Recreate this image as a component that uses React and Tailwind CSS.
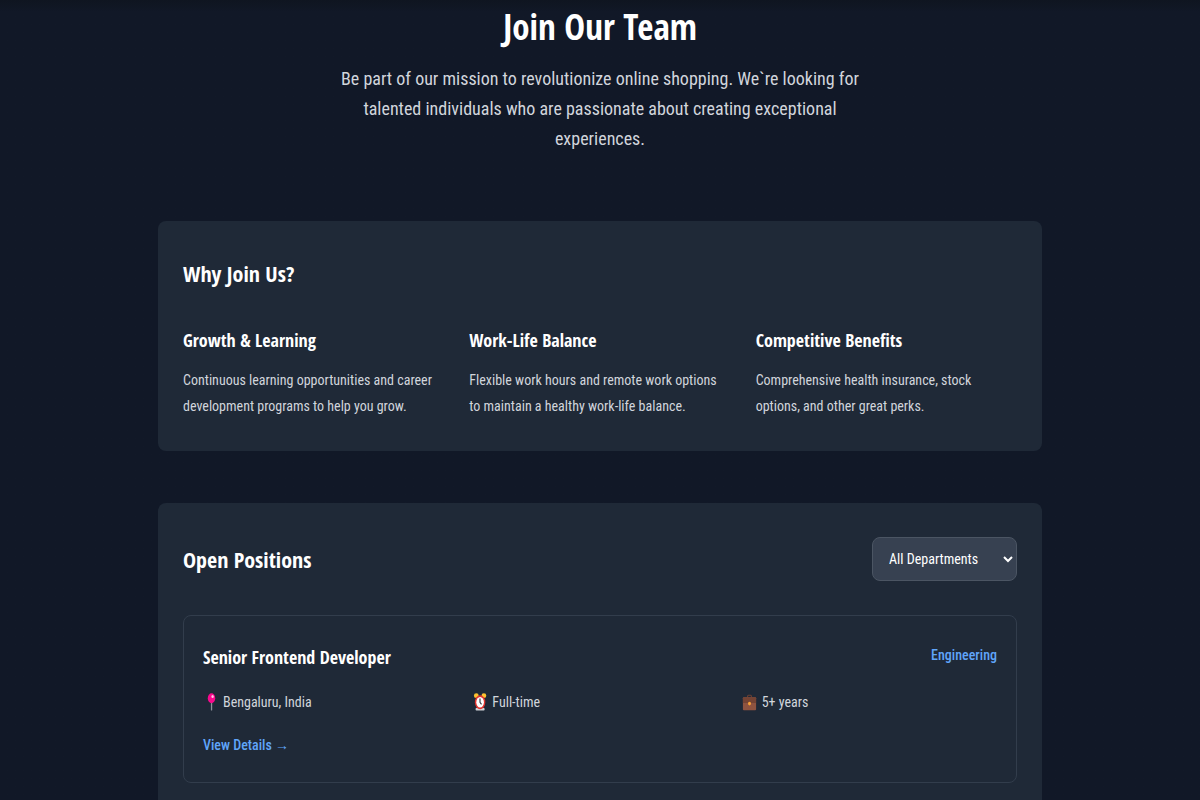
const benefits = [
  {
    title: 'Growth & Learning',
    text: 'Continuous learning opportunities and career development programs to help you grow.',
  },
  {
    title: 'Work-Life Balance',
    text: 'Flexible work hours and remote work options to maintain a healthy work-life balance.',
  },
  {
    title: 'Competitive Benefits',
    text: 'Comprehensive health insurance, stock options, and other great perks.',
  },
];

function PinIcon() {
  return (
    <svg className="h-[18px] w-4" viewBox="0 0 16 18" aria-hidden="true">
      <rect x="7.9" y="9" width="1.3" height="8.6" rx="0.6" fill="#8d939c" />
      <ellipse cx="8.5" cy="5.2" rx="3.7" ry="5" fill="#f8098d" />
      <ellipse cx="9.6" cy="3.5" rx="1.2" ry="1.5" fill="#ffc4e4" />
    </svg>
  );
}

function ClockIcon() {
  return (
    <svg className="h-[18px] w-4" viewBox="0 0 16 18" aria-hidden="true">
      <rect x="3.6" y="15" width="9" height="2.6" rx="0.8" fill="#cfd3d8" />
      <ellipse cx="4.3" cy="2.7" rx="2.4" ry="2.4" fill="#fcc22f" />
      <ellipse cx="11.9" cy="2.7" rx="2.4" ry="2.4" fill="#fcc22f" />
      <ellipse cx="8.1" cy="9.2" rx="5.2" ry="7" fill="#e2342f" />
      <ellipse cx="8.1" cy="9.2" rx="3.8" ry="5.2" fill="#ffffff" />
      <path d="M8 5.6V9.4L9.5 11.4" fill="none" stroke="#30353d" strokeWidth="1.1" />
    </svg>
  );
}

function BriefcaseIcon() {
  return (
    <svg className="h-[18px] w-4" viewBox="0 0 16 18" aria-hidden="true">
      <path d="M5.6 4.6V3.2Q5.6 2.2 6.4 2.2H8.6Q9.4 2.2 9.4 3.2V4.6" fill="none" stroke="#6b4034" strokeWidth="1.1" />
      <rect x="0.9" y="4.2" width="13.2" height="13" rx="1" fill="#8e5340" />
      <path d="M0.9 5.2Q0.9 4.2 1.9 4.2H13.1Q14.1 4.2 14.1 5.2V10H0.9Z" fill="#744334" />
      <ellipse cx="7.5" cy="10.6" rx="1.5" ry="1.8" fill="#f6a036" />
    </svg>
  );
}

const facts = [
  { Icon: PinIcon, text: 'Bengaluru, India' },
  { Icon: ClockIcon, text: 'Full-time' },
  { Icon: BriefcaseIcon, text: '5+ years' },
];

const h2 = "font-['Open_Sans_Condensed','Roboto_Condensed',sans-serif] text-[22px] leading-9 font-bold";
const h3 = "font-['Open_Sans_Condensed','Roboto_Condensed',sans-serif] text-lg leading-[30px] font-bold";
const accent = 'text-sm leading-[26px] font-medium text-[#60a5fa]';

export default function App() {
  return (
    <div className="min-h-screen bg-[#111827] bg-linear-to-b from-[#0f1520] to-[#111827] to-[12px] font-['Roboto_Condensed','Roboto',sans-serif] text-white">
      <main className="mx-auto flex min-h-screen max-w-[884px] flex-col">
        <header className="mx-auto max-w-[530px] pt-[7px] text-center">
          <h1 className="font-['Open_Sans_Condensed','Roboto_Condensed',sans-serif] text-[35px] leading-10 font-bold">
            Join Our Team
          </h1>
          <p className="mt-[17px] text-lg leading-[30px] text-gray-300">
            Be part of our mission to revolutionize online shopping. We`re looking for talented individuals who are
            passionate about creating exceptional experiences.
          </p>
        </header>

        <section className="mt-[67px] rounded-lg bg-[#1f2937] px-[25px] pt-[34px] pb-8">
          <h2 className={h2}>Why Join Us?</h2>
          <div className="mt-[34px] grid grid-cols-3 gap-[25px]">
            {benefits.map((b) => (
              <div key={b.title}>
                <h3 className={h3}>{b.title}</h3>
                <p className="mt-3 text-sm leading-[26px] text-gray-300">{b.text}</p>
              </div>
            ))}
          </div>
        </section>

        <section className="mt-[52px] grow rounded-t-lg bg-[#1f2937] px-[25px] pt-[34px] pb-4">
          <div className="flex items-center justify-between">
            <h2 className={h2}>Open Positions</h2>
            <select
              aria-label="Department"
              className="h-11 w-[145px] rounded-lg border border-[#4b5563] bg-[#374151] pl-3 text-sm text-white"
            >
              <option>All Departments</option>
              <option>Engineering</option>
            </select>
          </div>

          <article className="mt-[34px] rounded-lg border border-[#323d4c] px-[19px] pt-[26px] pb-6">
            <div className="flex items-start justify-between">
              <h3 className={h3}>Senior Frontend Developer</h3>
              <span className={accent}>Engineering</span>
            </div>
            <ul className="mt-[17px] grid grid-cols-3 gap-[14px] text-sm leading-[26px] text-gray-300">
              {facts.map(({ Icon, text }) => (
                <li key={text} className="flex items-center gap-1">
                  <Icon />
                  {text}
                </li>
              ))}
            </ul>
            <a href="#details" className={`mt-[17px] inline-block align-top ${accent}`}>
              View Details →
            </a>
          </article>
        </section>
      </main>
    </div>
  );
}
